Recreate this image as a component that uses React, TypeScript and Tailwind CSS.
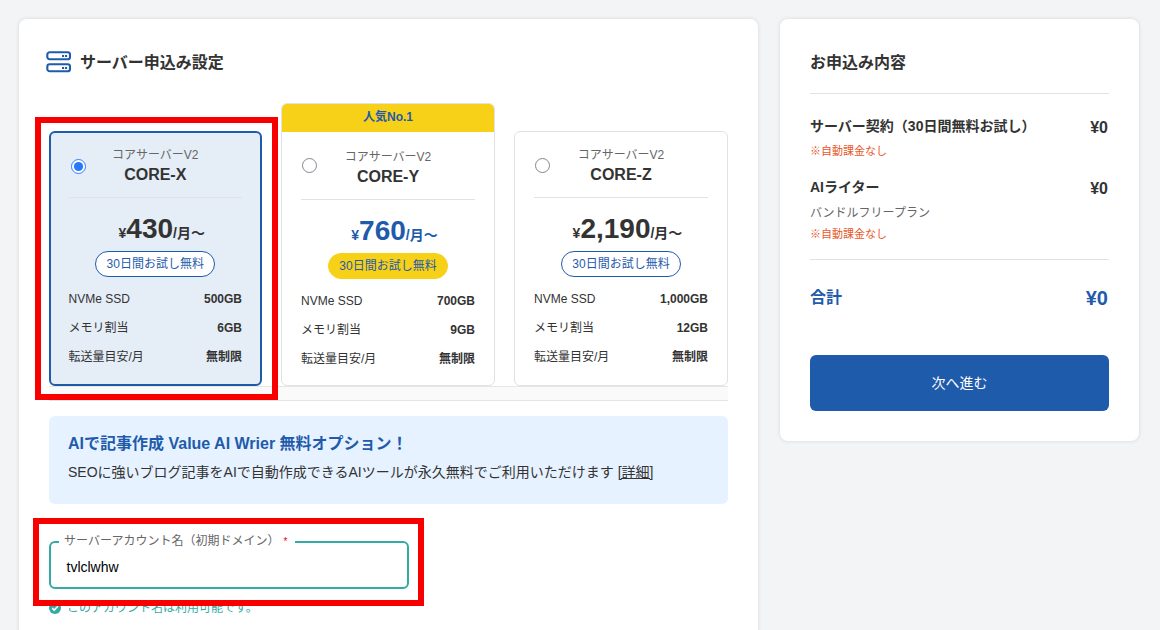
type Plan = {
  name: string;
  price: string;
  ssd: string;
  memory: string;
  selected?: boolean;
  popular?: boolean;
};

const plans: Plan[] = [
  { name: 'CORE-X', price: '430', ssd: '500GB', memory: '6GB', selected: true },
  { name: 'CORE-Y', price: '760', ssd: '700GB', memory: '9GB', popular: true },
  { name: 'CORE-Z', price: '2,190', ssd: '1,000GB', memory: '12GB' },
];

function ServerIcon() {
  return (
    <svg width="26" height="24" viewBox="0 0 26 24" fill="none" className="shrink-0">
      <rect x="1.3" y="2.3" width="22.7" height="7" rx="2.4" stroke="#1f5bab" strokeWidth="2.1" />
      <rect x="1.3" y="14.3" width="22.7" height="7" rx="2.4" stroke="#1f5bab" strokeWidth="2.1" />
      <path d="M16 6h2.1M19 6h2.1M16 18h2.1M19 18h2.1" stroke="#1f5bab" strokeWidth="2.2" />
    </svg>
  );
}

function Radio({ checked }: { checked?: boolean }) {
  return checked ? (
    <svg width="15" height="15" viewBox="0 0 15 15">
      <circle cx="7.5" cy="7.5" r="7" fill="#fff" stroke="#2a7fff" />
      <circle cx="7.5" cy="7.5" r="4.6" fill="#2878ff" />
    </svg>
  ) : (
    <svg width="15" height="15" viewBox="0 0 15 15">
      <circle cx="7.5" cy="7.5" r="7" fill="#fff" stroke="#85858f" />
    </svg>
  );
}

function SpecRow({ label, value }: { label: string; value: string }) {
  return (
    <div className="flex h-[29px] items-center justify-between text-xs leading-[18px]">
      <span>{label}</span>
      <span className="font-bold">{value}</span>
    </div>
  );
}

function PlanCard({ plan }: { plan: Plan }) {
  const frame = plan.selected
    ? 'mt-7 w-[213px] border-2 border-[#1f5bab] bg-[#e5edf7]'
    : plan.popular
      ? 'w-[214px] border border-[#e2e2e2] bg-white'
      : 'mt-7 w-[214px] border border-[#e2e2e2] bg-white';
  const body = plan.selected ? 'pl-[17.5px] pr-[18px]' : 'px-[19px]';
  const header = plan.selected ? 'h-[65px] pt-[13px]' : plan.popular ? 'h-[68px] pt-4' : 'h-[66px] pt-[14px]';
  const radio = plan.selected ? 'pt-[13px]' : plan.popular ? 'pt-[10px]' : 'pt-3';
  return (
    <div className={`overflow-hidden rounded-md ${frame}`}>
      {plan.popular && (
        <div className="h-7 bg-[#f7d018] text-center text-xs leading-[27px] font-bold text-[#1f5bab]">人気No.1</div>
      )}
      <div className={body}>
        <div className={`grid grid-cols-[18px_1fr_18px] border-b border-[#e2e2e2] ${header}`}>
          <div className={radio}>
            <div className={plan.selected ? 'ml-[2.5px]' : 'ml-[1px]'}>
              <Radio checked={plan.selected} />
            </div>
          </div>
          <div className="text-center">
            <div className="text-xs leading-[18px] text-[#666]">コアサーバーV2</div>
            <div className="text-base leading-[22px] font-bold">{plan.name}</div>
          </div>
        </div>
        <div
          className={`flex h-[53px] items-baseline justify-center pt-[13px] pl-[13px] font-bold whitespace-nowrap ${plan.popular ? 'text-[#1f5bab]' : ''}`}
        >
          <span className="text-sm leading-9">¥</span>
          <span className="text-[28px] leading-9">{plan.price}</span>
          <span className="text-sm leading-9">/月〜</span>
        </div>
        <div
          className={`mx-auto mb-[7px] h-[26px] w-[120px] rounded-full border text-center text-xs leading-6 text-[#1f5bab] ${plan.popular ? 'border-[#f7d018] bg-[#f7d018]' : 'border-[#1f5bab] bg-white'}`}
        >
          30日間お試し無料
        </div>
        <SpecRow label="NVMe SSD" value={plan.ssd} />
        <SpecRow label="メモリ割当" value={plan.memory} />
        <SpecRow label="転送量目安/月" value="無制限" />
      </div>
    </div>
  );
}

function AccountField() {
  return (
    <div>
      <fieldset className="h-[55px] w-[360px] rounded-md border-2 border-[#34aaa4] pl-2">
        <legend className="h-4 w-[236px] pl-[5px] text-xs leading-[15px] whitespace-nowrap text-[#666]">
          サーバーアカウント名（初期ドメイン）
          <span className="ml-[4px] text-[10px] text-[#f00000]">*</span>
        </legend>
        <div className="pt-[7px] pl-[7.5px] text-sm leading-5 text-black">tvlclwhw</div>
      </fieldset>
      <div className="mt-[9px] flex items-center gap-1.5 text-xs leading-5 text-[#34aaa4]">
        <svg width="12" height="12" viewBox="0 0 12 12">
          <circle cx="6" cy="6" r="6" fill="#34aaa4" />
          <path d="m3.2 6.1 2 2 3.7-3.8" fill="none" stroke="#fff" strokeWidth="1.5" />
        </svg>
        <span>このアカウント名は利用可能です。</span>
      </div>
    </div>
  );
}

function Summary() {
  return (
    <aside className="h-[422px] w-[359px] rounded-lg bg-white px-[30px] shadow-[0_0_4px_rgba(0,0,0,0.12)]">
      <h2 className="h-[75px] border-b border-[#e2e2e2] pt-8 text-base leading-6 font-bold">お申込み内容</h2>
      <div className="h-[166px] border-b border-[#e2e2e2] pt-[22px]">
        <div className="flex justify-between font-bold">
          <span className="text-sm leading-5">サーバー契約（30日間無料お試し）</span>
          <span className="pt-0.5 pr-px text-base leading-5">¥0</span>
        </div>
        <div className="mt-[3px] text-[11px] leading-5 text-[#e8582a]">※自動課金なし</div>
        <div className="mt-4 flex justify-between font-bold">
          <span className="text-sm leading-5">AIライター</span>
          <span className="pt-0.5 pr-px text-base leading-5">¥0</span>
        </div>
        <div className="mt-1 text-xs leading-5 text-[#666]">バンドルフリープラン</div>
        <div className="text-[11px] leading-[22px] text-[#e8582a]">※自動課金なし</div>
      </div>
      <div className="flex h-[95px] justify-between pt-[26px] font-bold text-[#1f5bab]">
        <span className="text-base leading-6">合計</span>
        <span className="pr-px text-xl leading-6">¥0</span>
      </div>
      <button className="h-14 w-full rounded-md bg-[#1f5bab] pb-px text-sm text-white">次へ進む</button>
    </aside>
  );
}

export default function App() {
  return (
    <div className="relative flex h-[630px] w-[1160px] items-start gap-[22px] overflow-hidden bg-[#f2f4f6] pt-[19px] pl-[19px] font-['Liberation_Sans','Noto_Sans_CJK_JP',sans-serif] text-[#333]">
      <main className="h-[640px] w-[739px] shrink-0 rounded-lg bg-white px-[30px] shadow-[0_0_4px_rgba(0,0,0,0.12)]">
        <h1 className="-ml-[3px] flex h-[84px] items-start gap-2 pt-[31px] text-base leading-[26px] font-bold">
          <ServerIcon />
          サーバー申込み設定
        </h1>
        <div className="grid h-[283px] grid-cols-[232px_233px_214px]">
          {plans.map((plan) => (
            <PlanCard key={plan.name} plan={plan} />
          ))}
        </div>
        <div className="h-[15px] border-y border-[#e6e6e6] bg-[#fafafa]" />
        <section className="mt-[15px] h-[88px] rounded-md bg-[#e6f2ff] px-[19px] pt-4">
          <h2 className="text-base leading-6 font-bold text-[#1f5bab]">AIで記事作成 Value AI Wrier 無料オプション！</h2>
          <p className="mt-1 text-sm leading-6">
            SEOに強いブログ記事をAIで自動作成できるAIツールが永久無料でご利用いただけます{' '}
            <a className="underline">[詳細]</a>
          </p>
        </section>
        <div className="mt-[30px]">
          <AccountField />
        </div>
      </main>
      <Summary />
      <div className="absolute top-[117px] left-[35px] h-[283px] w-[243px] border-6 border-[#f80000]" />
      <div className="absolute top-[518px] left-[33px] h-[88px] w-[391px] border-6 border-[#f80000]" />
    </div>
  );
}
